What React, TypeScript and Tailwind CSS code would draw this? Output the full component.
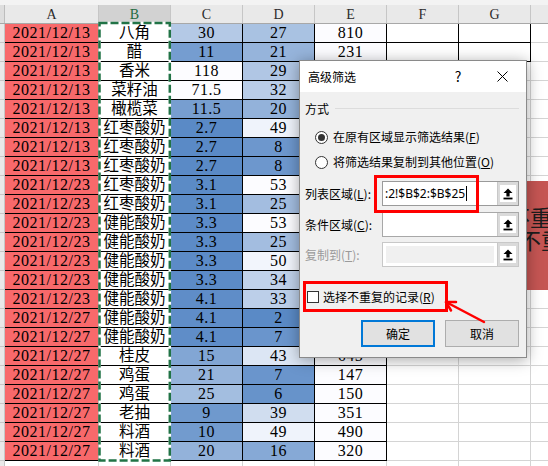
import React from 'react';

interface Item {
    date: string;
    name: string;
    price: number;
    qty: number;
}

const items: Item[] = [
    { date: '2021/12/13', name: '八角', price: 30, qty: 27 },
    { date: '2021/12/13', name: '醋', price: 11, qty: 21 },
    { date: '2021/12/13', name: '香米', price: 118, qty: 29 },
    { date: '2021/12/13', name: '菜籽油', price: 71.5, qty: 32 },
    { date: '2021/12/13', name: '橄榄菜', price: 11.5, qty: 20 },
    { date: '2021/12/13', name: '红枣酸奶', price: 2.7, qty: 49 },
    { date: '2021/12/13', name: '红枣酸奶', price: 2.7, qty: 8 },
    { date: '2021/12/13', name: '红枣酸奶', price: 2.7, qty: 8 },
    { date: '2021/12/23', name: '红枣酸奶', price: 3.1, qty: 53 },
    { date: '2021/12/23', name: '红枣酸奶', price: 3.1, qty: 25 },
    { date: '2021/12/23', name: '健能酸奶', price: 3.3, qty: 53 },
    { date: '2021/12/23', name: '健能酸奶', price: 3.3, qty: 25 },
    { date: '2021/12/23', name: '健能酸奶', price: 3.3, qty: 50 },
    { date: '2021/12/23', name: '健能酸奶', price: 3.3, qty: 34 },
    { date: '2021/12/23', name: '健能酸奶', price: 4.1, qty: 33 },
    { date: '2021/12/27', name: '健能酸奶', price: 4.1, qty: 2 },
    { date: '2021/12/27', name: '健能酸奶', price: 4.1, qty: 7 },
    { date: '2021/12/27', name: '桂皮', price: 15, qty: 43 },
    { date: '2021/12/27', name: '鸡蛋', price: 21, qty: 7 },
    { date: '2021/12/27', name: '鸡蛋', price: 25, qty: 6 },
    { date: '2021/12/27', name: '老抽', price: 9, qty: 39 },
    { date: '2021/12/27', name: '料酒', price: 10, qty: 49 },
    { date: '2021/12/27', name: '料酒', price: 20, qty: 16 },
];

// excel style 2-colour scale, blue at min, white at max
const BLUE = [90, 138, 198];
const WHITE = [252, 252, 255];

const scale = (v: number, min: number, max: number) => {
    const t = Math.min(1, Math.max(0, (v - min) / (max - min)));
    const c = BLUE.map((b, i) => Math.round(b + (WHITE[i] - b) * t));
    return `rgb(${c[0]}, ${c[1]}, ${c[2]})`;
};

const fmt = (n: number) => String(Math.round(n * 10) / 10);

const HeaderRow = () => (
    <div className="flex flex-col h-[24px]">
        <div className="h-[5px] bg-[#f3f3f3]" />
        <div className="flex h-[19px] bg-[#e9e9e9] border-b border-[#a8a8a8] text-[14px] text-[#2b2b2b]">
            <div className="w-[5px] shrink-0 border-r border-[#bdbdbd] bg-[#dedede]" />
            <div className="w-[94px] shrink-0 flex items-center justify-center border-r border-[#c6c6c6]">A</div>
            <div className="w-[72px] shrink-0 flex items-center justify-center border-r border-[#c6c6c6] bg-[#d2d2d2] text-[#1d6b40]">B</div>
            <div className="w-[72px] shrink-0 flex items-center justify-center border-r border-[#c6c6c6]">C</div>
            <div className="w-[72px] shrink-0 flex items-center justify-center border-r border-[#c6c6c6]">D</div>
            <div className="w-[72px] shrink-0 flex items-center justify-center border-r border-[#c6c6c6]">E</div>
            <div className="w-[72px] shrink-0 flex items-center justify-center border-r border-[#c6c6c6]">F</div>
            <div className="w-[72px] shrink-0 flex items-center justify-center border-r border-[#c6c6c6]">G</div>
            <div className="flex-1" />
        </div>
    </div>
);

const DataRow = ({ item, index }: { item: Item; index: number }) => {
    const ruled = index < 2;
    return (
        <div className="flex h-[19px] text-black">
            <div className="w-[5px] shrink-0 bg-[#e9e9e9] border-r border-b border-[#c6c6c6]" />
            <div className="w-[94px] shrink-0 flex items-center justify-center bg-[#f8696b] border-r border-b border-black text-[16px] tracking-[0.5px]">
                {item.date}
            </div>
            <div className="w-[72px] shrink-0 flex items-center justify-center bg-white border-r border-b border-black text-[15.5px]">
                {item.name}
            </div>
            <div
                className="w-[72px] shrink-0 flex items-center justify-center border-r border-b border-black text-[16px] tracking-[0.5px]"
                style={{ backgroundColor: scale(item.price, 2.7, 52) }}
            >
                {fmt(item.price)}
            </div>
            <div
                className="w-[72px] shrink-0 flex items-center justify-center border-r border-b border-black text-[16px] tracking-[0.5px]"
                style={{ backgroundColor: scale(item.qty, 2, 53) }}
            >
                {item.qty}
            </div>
            <div className="w-[72px] shrink-0 flex items-center justify-center bg-[#fcfcff] border-r border-b border-black text-[16px] tracking-[0.5px]">
                {fmt(item.price * item.qty)}
            </div>
            <div className={ruled ? 'w-[72px] shrink-0 border-r border-b border-black' : 'w-[72px] shrink-0 border-r border-b border-[#d4d4d4]'} />
            <div className={ruled ? 'w-[72px] shrink-0 border-r border-b border-black' : 'w-[72px] shrink-0 border-r border-b border-[#d4d4d4]'} />
            <div className="flex-1 border-b border-[#d4d4d4]" />
        </div>
    );
};

const TailRow = () => (
    <div className="flex h-[5px]">
        <div className="w-[5px] shrink-0 bg-[#e9e9e9] border-r border-[#c6c6c6]" />
        <div className="w-[94px] shrink-0 border-r border-[#d4d4d4]" />
        <div className="w-[72px] shrink-0 border-r border-[#d4d4d4]" />
        <div className="w-[72px] shrink-0 border-r border-[#d4d4d4]" />
        <div className="w-[72px] shrink-0 border-r border-[#d4d4d4]" />
        <div className="w-[72px] shrink-0 border-r border-[#d4d4d4]" />
        <div className="w-[72px] shrink-0 border-r border-[#d4d4d4]" />
        <div className="w-[72px] shrink-0 border-r border-[#d4d4d4]" />
        <div className="flex-1" />
    </div>
);

const UpButton = () => (
    <div className="w-[21px] shrink-0 self-stretch bg-[#dadada] border-l border-[#c8c8c8] flex items-center justify-center">
        <div className="w-[16px] h-[17px] bg-white flex items-center justify-center">
            <svg width="10" height="12" viewBox="0 0 10 12">
                <path d="M5 0.5 L9.5 5 H6.6 V8.4 H3.4 V5 H0.5 Z" fill="#000" />
                <rect x="0.5" y="9.6" width="9" height="1.8" fill="#000" />
            </svg>
        </div>
    </div>
);

const Radio = ({ checked }: { checked?: boolean }) => (
    <div className="w-[13px] h-[13px] shrink-0 rounded-full border border-[#333] bg-white flex items-center justify-center">
        {checked && <div className="w-[7px] h-[7px] rounded-full bg-[#333]" />}
    </div>
);

const Dialog = () => (
    <div className="absolute left-[299px] top-[60px] w-[228px] h-[298px] z-20 border border-[#8a8a8a] bg-[#f0f0f0] shadow-[0_2px_14px_rgba(0,0,0,0.35)] font-['Noto_Sans_CJK_SC','Noto_Sans',sans-serif] text-[12px] text-black">
        <div className="h-[31px] bg-white flex items-center pl-[8px] pr-[18px]">
            <span>高级筛选</span>
            <span className="ml-auto w-[14px] text-center text-[14px]">?</span>
            <svg className="ml-[32px]" width="11" height="11" viewBox="0 0 11 11">
                <path d="M0.5 0.5 L10.5 10.5 M10.5 0.5 L0.5 10.5" stroke="#000" strokeWidth="1" />
            </svg>
        </div>

        <div className="pl-[5px] pr-[7px]">
            <div className="mt-[8px] h-[17px] flex items-center">
                <span>方式</span>
                <div className="flex-1 h-px ml-[6px] bg-[#dcdcdc]" />
            </div>

            <div className="mt-[10px] h-[20px] flex items-center pl-[10px]">
                <Radio checked />
                <span className="ml-[5px]">在原有区域显示筛选结果(<span className="underline">F</span>)</span>
            </div>
            <div className="mt-[5px] h-[20px] flex items-center pl-[10px]">
                <Radio />
                <span className="ml-[5px]">将筛选结果复制到其他位置(<span className="underline">O</span>)</span>
            </div>

            <div className="mt-[9px] h-[25px] flex items-center">
                <span className="w-[77px] shrink-0">列表区域(<span className="underline">L</span>):</span>
                <div className="flex-1 h-full flex border border-[#9a9a9a] bg-white">
                    <div className="flex-1 flex items-center pl-[2px] font-['Noto_Sans',sans-serif] text-[12px]">
                        <span>:2!$B$2:$B$25</span>
                        <span className="inline-block w-px h-[15px] bg-black ml-[1px]" />
                    </div>
                    <UpButton />
                </div>
            </div>
            <div className="mt-[6px] h-[25px] flex items-center">
                <span className="w-[77px] shrink-0">条件区域(<span className="underline">C</span>):</span>
                <div className="flex-1 h-full flex border border-[#a8a8a8] bg-white">
                    <div className="flex-1" />
                    <UpButton />
                </div>
            </div>
            <div className="mt-[5px] h-[25px] flex items-center">
                <span className="w-[77px] shrink-0 text-[#9a9a9a]">复制到(<span className="underline">T</span>):</span>
                <div className="flex-1 h-full flex border border-[#c8c8c8] bg-white">
                    <div className="flex-1 p-[3px]">
                        <div className="w-full h-full bg-[#f0f0f0]" />
                    </div>
                    <UpButton />
                </div>
            </div>

            <div className="mt-[14px] -ml-[2px] w-[145px] h-[31px] border-[3px] border-[#ff0000] flex items-center pl-[1px]">
                <div className="w-[12px] h-[12px] shrink-0 border border-[#333] bg-white" />
                <span className="ml-[4px]">选择不重复的记录(<span className="underline">R</span>)</span>
            </div>

            <div className="mt-[8px] ml-[56px] flex gap-[10px]">
                <div className="w-[74px] h-[27px] flex items-center justify-center bg-[#e1e1e1] border-2 border-[#0078d7]">确定</div>
                <div className="w-[74px] h-[27px] flex items-center justify-center bg-[#e1e1e1] border border-[#adadad]">取消</div>
            </div>
        </div>

        {/* red annotation around the list range */}
        <div className="absolute left-[74px] top-[114px] w-[105px] h-[38px] border-[3px] border-[#ff0000]" />
    </div>
);

const App = () => {
    return (
        <div className="relative w-[548px] h-[466px] overflow-hidden bg-white font-['Liberation_Serif','Noto_Sans_CJK_SC',serif]">
            <HeaderRow />
            {items.map((item, index) => (
                <DataRow key={index} item={item} index={index} />
            ))}
            <TailRow />

            {/* copy marquee around column B */}
            <svg className="absolute left-[97px] top-[20px] z-10" width="76" height="444" viewBox="0 0 76 444">
                <rect x="2.5" y="3" width="70.3" height="437.5" fill="none" stroke="#ffffff" strokeWidth="2.5" />
                <rect x="2.5" y="3" width="70.3" height="437.5" fill="none" stroke="#217346" strokeWidth="2.5" strokeDasharray="8 3" />
            </svg>

            {/* floating shape behind the dialog */}
            <div className="absolute left-[470px] top-[181px] w-[100px] h-[109px] z-10 bg-[#c55553] text-[22px] leading-[23px] text-[#1c1c1c] font-['Noto_Sans_CJK_SC',sans-serif]">
                <div className="pt-[24px] pl-[38px] whitespace-nowrap">不重复</div>
                <div className="pl-[49px] whitespace-nowrap">不重复</div>
            </div>

            <Dialog />

            <svg className="absolute left-[440px] top-[296px] z-30" width="50" height="32" viewBox="0 0 50 32">
                <path d="M44 26 L6 6" stroke="#ff0000" strokeWidth="2.5" strokeLinecap="round" />
                <path d="M16 6 L6 6 L11 14.5" fill="none" stroke="#ff0000" strokeWidth="2.5" strokeLinecap="round" strokeLinejoin="round" />
            </svg>
        </div>
    );
};

export default App;
